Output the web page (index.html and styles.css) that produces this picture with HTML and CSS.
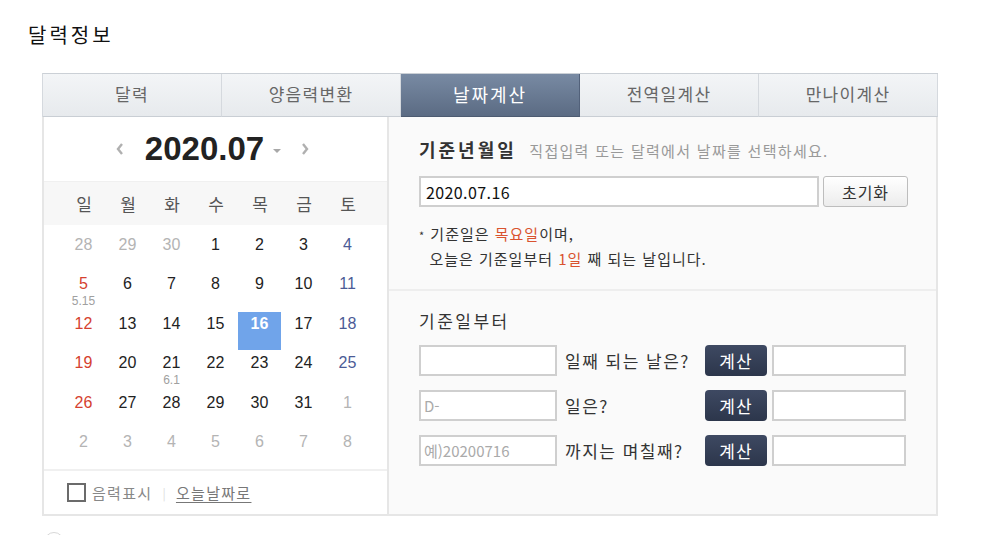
FILE: index.html
```html
<!DOCTYPE html>
<html lang="ko">
<head>
    <meta charset="UTF-8">
    <title>달력정보</title>
    <link rel="stylesheet" href="styles.css">
</head>
<body>
    <h2 class="page-title">달력정보</h2>

    <div class="calc-box">
        <ul class="tabs">
            <li>달력</li>
            <li>양음력변환</li>
            <li class="on">날짜계산</li>
            <li>전역일계산</li>
            <li>만나이계산</li>
        </ul>

        <div class="panel">
            <div class="cal">
                <div class="cal-head">
                    <svg class="nav" width="10" height="14" viewBox="0 0 10 14"><path d="M7 2 L3 7 L7 12" fill="none" stroke="#b0b0b0" stroke-width="2.4"/></svg>
                    <span class="month">2020.07</span>
                    <svg class="caret" width="8" height="5" viewBox="0 0 8 5"><path d="M0 0 H8 L4 4 Z" fill="#a8a8a8"/></svg>
                    <svg class="nav next" width="10" height="14" viewBox="0 0 10 14"><path d="M3 2 L7 7 L3 12" fill="none" stroke="#b0b0b0" stroke-width="2.4"/></svg>
                </div>

                <div class="week">
                    <span>일</span><span>월</span><span>화</span><span>수</span><span>목</span><span>금</span><span>토</span>
                </div>

                <div class="days">
                    <span class="other">28</span><span class="other">29</span><span class="other">30</span><span>1</span><span>2</span><span>3</span><span class="sat">4</span>
                    <span class="sun">5<em>5.15</em></span><span>6</span><span>7</span><span>8</span><span>9</span><span>10</span><span class="sat">11</span>
                    <span class="sun">12</span><span>13</span><span>14</span><span>15</span><span class="sel">16</span><span>17</span><span class="sat">18</span>
                    <span class="sun">19</span><span>20</span><span>21<em>6.1</em></span><span>22</span><span>23</span><span>24</span><span class="sat">25</span>
                    <span class="sun">26</span><span>27</span><span>28</span><span>29</span><span>30</span><span>31</span><span class="other">1</span>
                    <span class="other">2</span><span class="other">3</span><span class="other">4</span><span class="other">5</span><span class="other">6</span><span class="other">7</span><span class="other">8</span>
                </div>

                <div class="cal-foot">
                    <span class="check"></span>
                    <span class="check-label">음력표시</span>
                    <span class="bar">|</span>
                    <a class="today">오늘날짜로</a>
                </div>
            </div>

            <div class="calc">
                <div class="base">
                    <div class="base-title">
                        <strong>기준년월일</strong>
                        <span class="hint">직접입력 또는 달력에서 날짜를 선택하세요.</span>
                    </div>
                    <div class="base-row">
                        <input class="date-input" type="text" value="2020.07.16">
                        <button class="btn-reset">초기화</button>
                    </div>
                    <p class="note">
                        <span class="star">*</span> 기준일은 <span class="red">목요일</span>이며,<br>
                        &nbsp;&nbsp;오늘은 기준일부터 <span class="red">1일</span> 째 되는 날입니다.
                    </p>
                </div>

                <div class="from">
                    <div class="from-title">기준일부터</div>
                    <div class="calc-row">
                        <input class="field" type="text">
                        <span class="label">일째 되는 날은?</span>
                        <button class="btn-calc">계산</button>
                        <input class="result" type="text">
                    </div>
                    <div class="calc-row">
                        <input class="field" type="text" placeholder="D-">
                        <span class="label">일은?</span>
                        <button class="btn-calc">계산</button>
                        <input class="result" type="text">
                    </div>
                    <div class="calc-row">
                        <input class="field" type="text" placeholder="예)20200716">
                        <span class="label">까지는 며칠째?</span>
                        <button class="btn-calc">계산</button>
                        <input class="result" type="text">
                    </div>
                </div>
            </div>
        </div>
    </div>

    <div class="more"></div>
</body>
</html>
```

FILE: styles.css
```css
* {
    box-sizing: border-box;
}

body {
    margin: 0;
    font-family: "Noto Sans CJK KR", "Noto Sans", sans-serif;
    color: #333;
    background: #fff;
}

.page-title {
    margin: 0;
    padding: 21px 0 0 28px;
    font-size: 20px;
    font-weight: normal;
    line-height: 28px;
    letter-spacing: 3px;
    color: #111;
}

.calc-box {
    width: 896px;
    margin: 24px 0 0 42px;
}

/* tabs */
.tabs {
    display: flex;
    margin: 0;
    padding: 0;
    list-style: none;
    border-top: 1px solid #cbd0d6;
    border-left: 1px solid #d5d9de;
}

.tabs li {
    flex: 1;
    height: 43px;
    line-height: 40px;
    text-align: center;
    font-size: 17px;
    letter-spacing: 1.3px;
    color: #666;
    background: linear-gradient(#f3f5f7, #e7eaed);
    border-right: 1px solid #d5d9de;
    border-bottom: 1px solid #c9ced4;
}

.tabs li.on {
    font-size: 18px;
    letter-spacing: 2px;
    color: #fff;
    background: linear-gradient(#788aa3, #5b6b83);
    border-right-color: #52617a;
    border-bottom-color: #4d5b71;
}

.panel {
    display: flex;
    height: 399px;
    border: 2px solid #e6e6e6;
    border-top: 0;
}

/* calendar */
.cal {
    width: 345px;
    display: flex;
    flex-direction: column;
    border-right: 2px solid #e6e6e6;
    background: #fff;
}

.cal-head {
    height: 64px;
    display: flex;
    align-items: center;
    justify-content: center;
    padding-right: 6px;
}

.cal-head .month {
    margin-left: 20px;
    font-family: "Liberation Sans", Arial, sans-serif;
    font-size: 33px;
    font-weight: bold;
    color: #222;
}

.cal-head .caret {
    margin-left: 9px;
    margin-top: 4px;
}

.cal-head .next {
    margin-left: 19px;
}

.week,
.days {
    display: grid;
    grid-template-columns: repeat(7, 44px);
    padding-left: 18px;
}

.week {
    height: 44px;
    align-items: center;
    background: #f7f7f7;
    border-top: 1px solid #f0f0f0;
    font-size: 17px;
    color: #555;
    text-align: center;
}

.days {
    grid-template-rows: repeat(6, 39.4px);
    padding-top: 8px;
    font-family: "Liberation Sans", Arial, sans-serif;
    font-size: 16px;
    color: #222;
    text-align: center;
}

.days span {
    display: flex;
    flex-direction: column;
    align-items: center;
    width: 43px;
    height: 38px;
    padding-top: 2px;
    line-height: 20px;
}

.days em {
    font-style: normal;
    font-size: 12px;
    line-height: 15px;
    color: #a0a0a0;
}

.days .sun {
    color: #d5412f;
}

.days .sat {
    color: #4b5b96;
}

.days .other {
    color: #b4b4b4;
}

.days .sel {
    background: #70a4ea;
    color: #fff;
    font-weight: bold;
}

.cal-foot {
    flex: 1;
    display: flex;
    align-items: center;
    padding-left: 23px;
    border-top: 2px solid #f0f0f0;
    font-size: 15px;
    letter-spacing: 1.3px;
}

.check {
    width: 19px;
    height: 19px;
    border: 2px solid #6b6b6b;
}

.check-label {
    margin-left: 6px;
    color: #888;
}

.bar {
    margin: 0 9px 0 10px;
    font-size: 12px;
    color: #ddd;
}

.today {
    color: #777;
    text-decoration: underline;
    text-underline-offset: 3px;
}

/* date calculation */
.calc {
    flex: 1;
    background: #fafafa;
}

.base {
    height: 174px;
    padding: 20px 0 0 30px;
    border-bottom: 2px solid #eee;
}

.base-title {
    line-height: 24px;
}

.base-title strong {
    font-size: 18px;
    letter-spacing: 3px;
    color: #333;
}

.hint {
    margin-left: 8px;
    font-size: 15px;
    letter-spacing: 1.3px;
    color: #999;
}

.base-row {
    display: flex;
    margin-top: 13px;
}

.date-input {
    width: 400px;
    height: 31px;
    padding: 0 5px;
    border: 2px solid #cfcfcf;
    background: #fff;
    font-family: inherit;
    font-size: 16px;
    letter-spacing: 0.4px;
    color: #111;
}

.btn-reset {
    width: 85px;
    height: 31px;
    margin-left: 4px;
    border: 1px solid #bdbdbd;
    border-radius: 3px;
    background: linear-gradient(#fff, #ececec);
    font-family: inherit;
    font-size: 16px;
    letter-spacing: 1px;
    color: #333;
}

.note {
    margin: 15px 0 0;
    font-size: 15px;
    line-height: 23px;
    letter-spacing: 1px;
    color: #333;
}

.note .star {
    font-size: 11px;
}

.note .red {
    color: #d9532f;
}

.from {
    padding: 18px 0 0 30px;
}

.from-title {
    font-size: 17px;
    line-height: 24px;
    letter-spacing: 2.5px;
    color: #333;
}

.calc-row {
    display: flex;
    align-items: center;
    height: 31px;
    margin-top: 14px;
}

.from-title + .calc-row {
    margin-top: 12px;
}

.field,
.result {
    height: 31px;
    padding: 0 3px;
    border: 2px solid #cfcfcf;
    background: #fff;
    font-family: inherit;
    font-size: 15px;
}

.field {
    width: 138px;
}

.field::placeholder {
    color: #aaa;
}

.result {
    width: 134px;
    margin-left: 5px;
}

.label {
    width: 148px;
    padding-left: 8px;
    font-size: 17px;
    letter-spacing: 1.5px;
    color: #333;
}

.btn-calc {
    width: 62px;
    height: 31px;
    border: 0;
    border-radius: 4px;
    background: linear-gradient(#3e4962, #2c364b);
    font-family: inherit;
    font-size: 17px;
    letter-spacing: 1px;
    color: #fff;
}

.more {
    width: 20px;
    height: 20px;
    margin: 16px 0 0 44px;
    border: 1px solid #d8d8d8;
    border-radius: 50%;
}
```
